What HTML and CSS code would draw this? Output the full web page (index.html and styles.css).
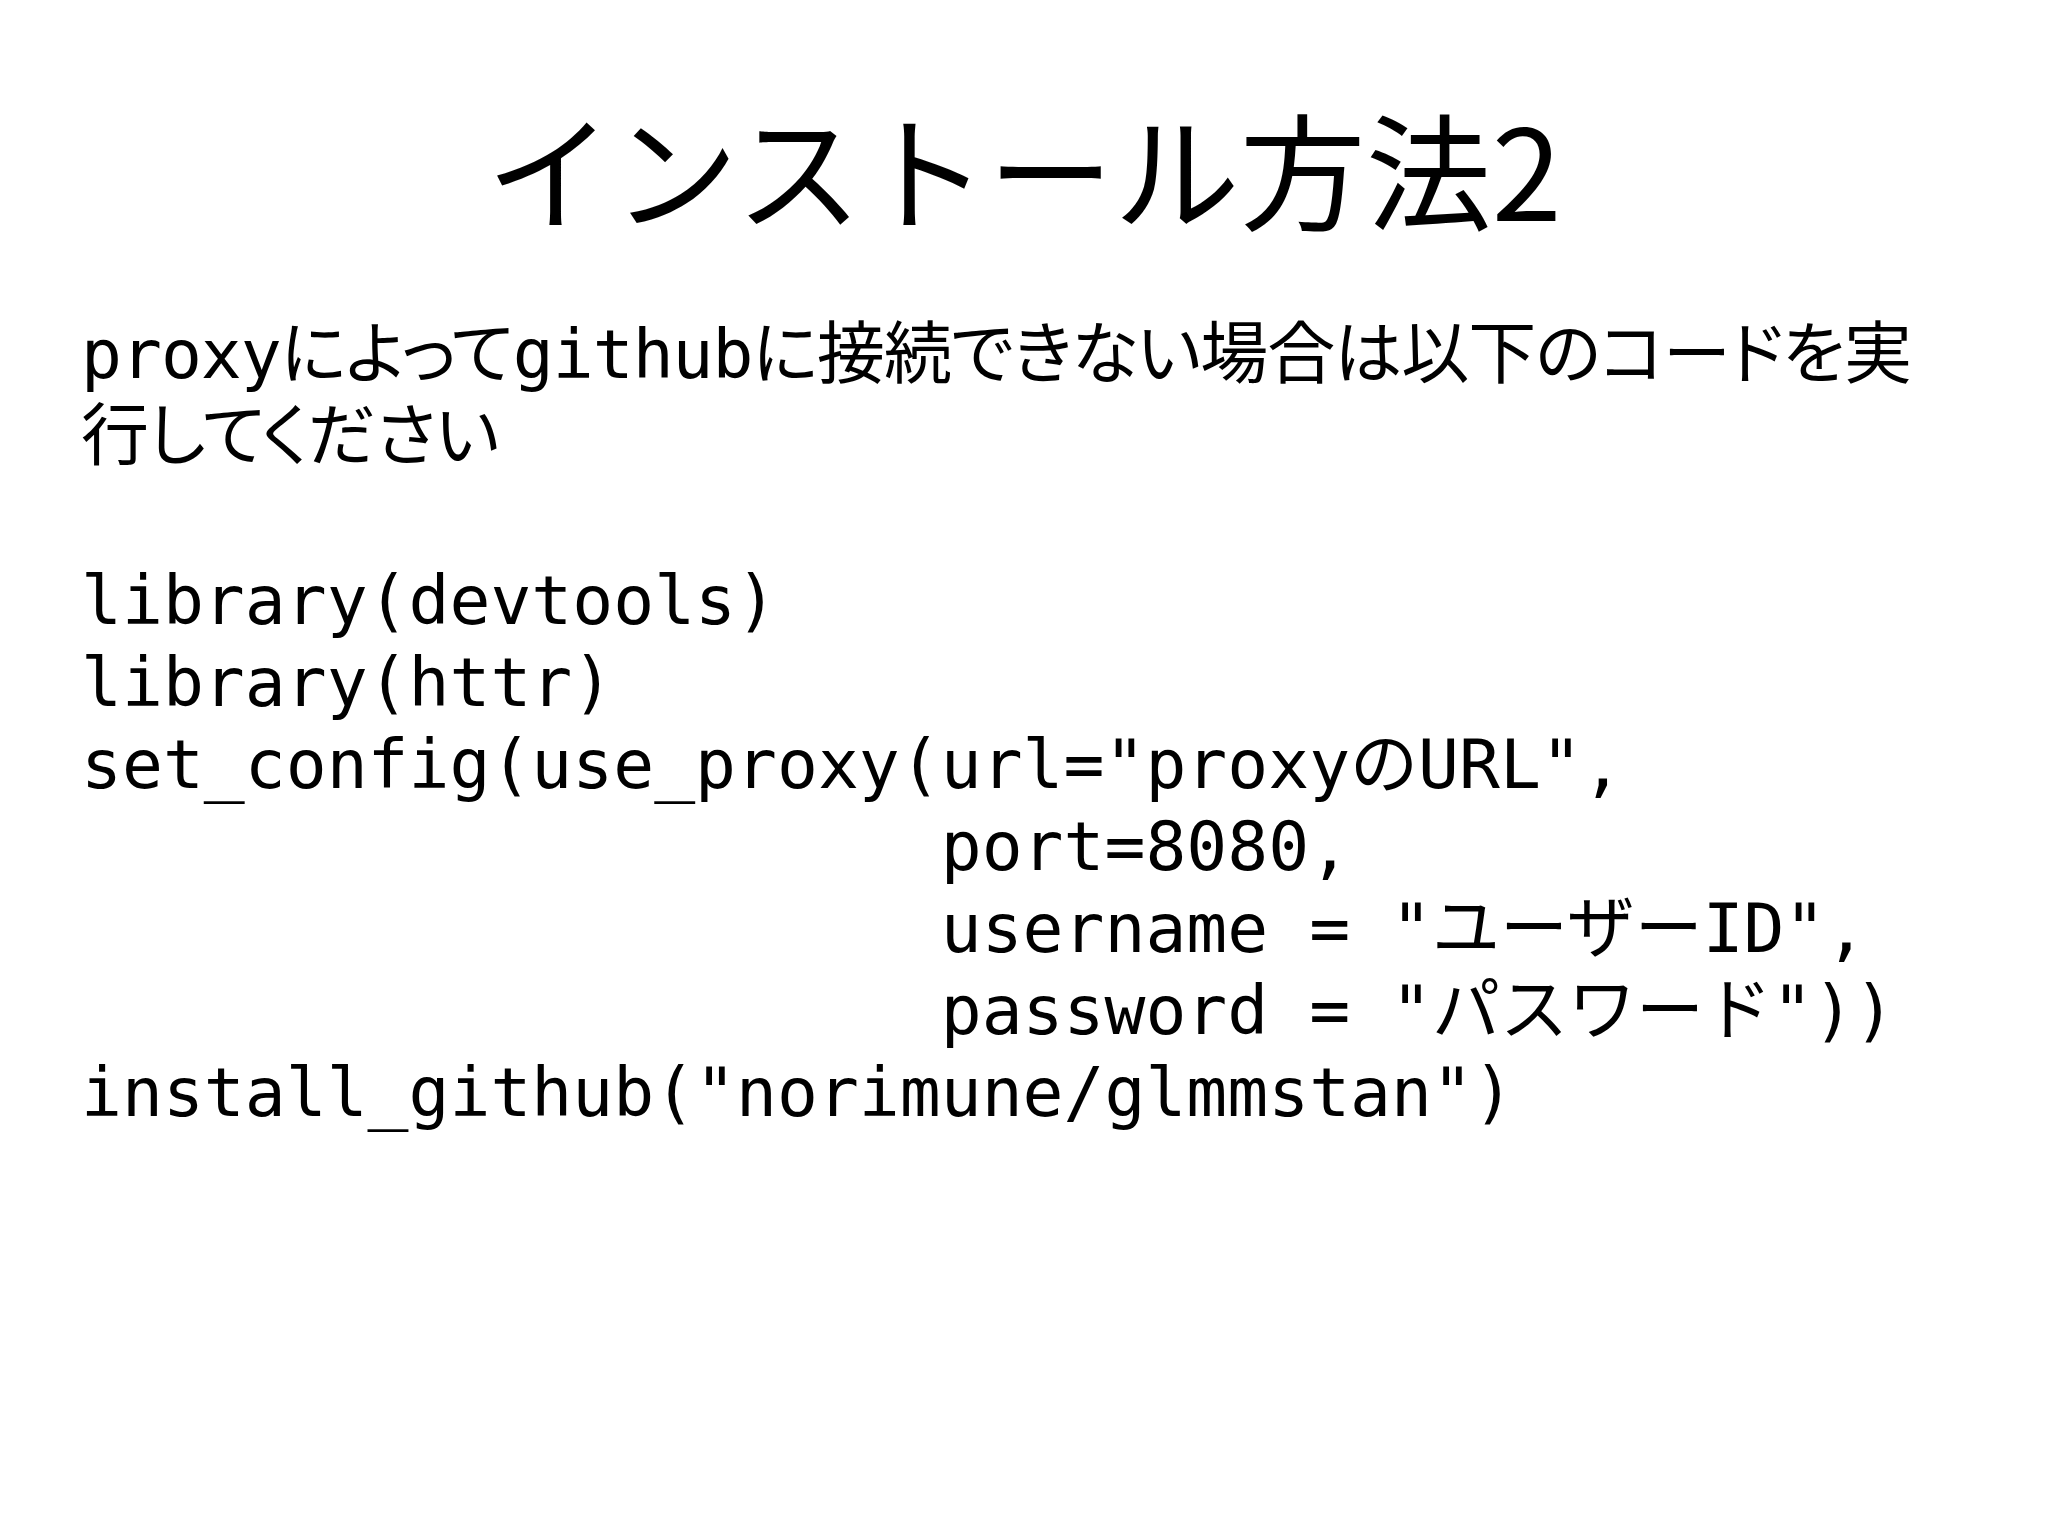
FILE: index.html
```html
<!DOCTYPE html>
<html lang="ja">
<head>
<meta charset="utf-8">
<title>インストール方法2</title>
<link rel="stylesheet" href="styles.css">
</head>
<body>
<main class="slide">
  <h1 class="title">インストール方法2</h1>
  <div class="body">
    <p class="lead">proxyによってgithubに接続できない場合は以下のコードを実<br>行してください</p>
    <pre class="code">library(devtools)
library(httr)
set_config(use_proxy(url="proxyのURL",
                     port=8080,
                     username = "ユーザーID",
                     password = "パスワード"))
install_github("norimune/glmmstan")</pre>
  </div>
</main>
</body>
</html>
```

FILE: styles.css
```css
html, body {
  margin: 0;
  padding: 0;
  background: #ffffff;
}

.slide {
  width: 2048px;
  height: 1536px;
  box-sizing: border-box;
  padding: 91px 0 0 0;
  display: flex;
  flex-direction: column;
  color: #000000;
}

.title {
  margin: 0;
  font-family: "Noto Sans CJK JP", sans-serif;
  font-weight: 400;
  font-size: 126px;
  line-height: 150px;
  text-align: center;
}

.body {
  padding: 73px 0 0 81px;
  font-family: "DejaVu Sans Mono", "Noto Sans CJK JP", monospace;
  font-size: 68px;
  line-height: 82px;
}

.lead {
  margin: 0 0 82px 0;
  font-feature-settings: "palt";
  letter-spacing: -1px;
}

.code {
  margin: 0;
  font: inherit;
  white-space: pre;
}
```
